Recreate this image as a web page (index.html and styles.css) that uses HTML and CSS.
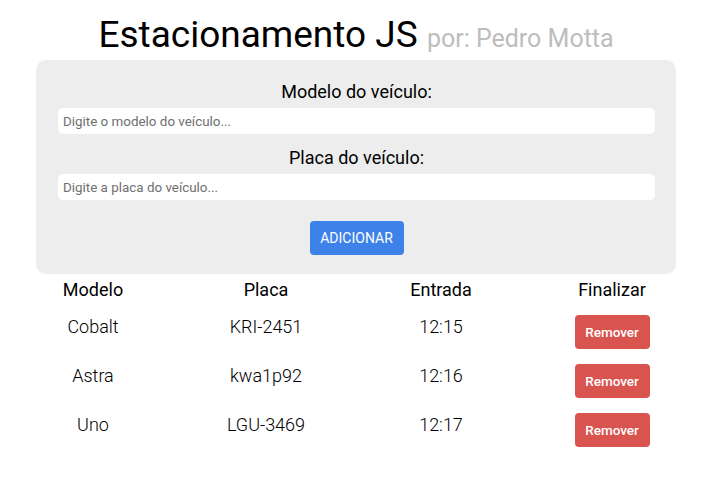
FILE: index.html
```html
<!DOCTYPE html>
<html lang="pt-BR">
<head>
<meta charset="utf-8">
<title>Estacionamento JS</title>
<link rel="stylesheet" href="styles.css">
</head>
<body>
<h1 class="title">Estacionamento JS <span class="author">por: Pedro Motta</span></h1>
<form class="panel">
  <label class="label" for="modelo">Modelo do veículo:</label>
  <input class="field" id="modelo" type="text" placeholder="Digite o modelo do veículo...">
  <label class="label" for="placa">Placa do veículo:</label>
  <input class="field" id="placa" type="text" placeholder="Digite a placa do veículo...">
  <button class="btn-add" type="button">ADICIONAR</button>
</form>
<div class="table">
  <div class="row head">
    <div class="cell">Modelo</div>
    <div class="cell">Placa</div>
    <div class="cell">Entrada</div>
    <div class="cell">Finalizar</div>
  </div>
  <div class="row">
    <div class="cell">Cobalt</div>
    <div class="cell">KRI-2451</div>
    <div class="cell">12:15</div>
    <div class="cell"><button class="btn-remove" type="button">Remover</button></div>
  </div>
  <div class="row">
    <div class="cell">Astra</div>
    <div class="cell">kwa1p92</div>
    <div class="cell">12:16</div>
    <div class="cell"><button class="btn-remove" type="button">Remover</button></div>
  </div>
  <div class="row">
    <div class="cell">Uno</div>
    <div class="cell">LGU-3469</div>
    <div class="cell">12:17</div>
    <div class="cell"><button class="btn-remove" type="button">Remover</button></div>
  </div>
</div>
</body>
</html>
```
FILE: styles.css
```css
* { box-sizing: border-box; }
body {
  margin: 0;
  font-family: Roboto, "Liberation Sans", sans-serif;
  color: #000;
  background: #fff;
}
.title {
  margin: 0 48px 0 36px;
  padding-top: 13px;
  height: 60px;
  text-align: center;
  font-weight: 400;
  font-size: 37px;
  line-height: 44px;
  white-space: nowrap;
}
.author {
  font-size: 25px;
  color: #bdbdbd;
}
.panel {
  margin: 0 48px 0 36px;
  background: #ededed;
  border-radius: 10px;
  padding: 20px 21px 19px 22px;
  display: flex;
  flex-direction: column;
  align-items: center;
}
.label {
  font-size: 18px;
  line-height: 24px;
  margin-bottom: 4px;
}
.field {
  width: 100%;
  height: 26px;
  border: none;
  border-radius: 5px;
  background: #fff;
  padding: 0 5px;
  font-family: Roboto, "Liberation Sans", sans-serif;
  font-size: 13.4px;
  margin-bottom: 12px;
}
.field::placeholder { color: #6f6f6f; }
.btn-add {
  margin-top: 9px;
  width: 94px;
  height: 34px;
  border: none;
  border-radius: 4px;
  background: #3d82e8;
  color: #fff;
  font-family: Roboto, "Liberation Sans", sans-serif;
  font-size: 14px;
}
.table {
  margin-left: 10px;
  width: 688px;
  padding-top: 1px;
}
.row {
  display: grid;
  grid-template-columns: 166px 180px 170px 172px;
  align-items: start;
  height: 49px;
}
.row.head {
  height: 30px;
  align-items: center;
  margin-bottom: 1px;
}
.cell {
  text-align: center;
  font-size: 18px;
  line-height: 24px;
  font-weight: 300;
  padding-top: 9px;
}
.head .cell { font-weight: 400; padding-top: 0; }
.btn-remove {
  display: block;
  margin: 0 auto;
  width: 75px;
  height: 34px;
  border: none;
  border-radius: 4px;
  background: #d9534f;
  color: #fff;
  font-family: Roboto, "Liberation Sans", sans-serif;
  font-size: 13.5px;
  font-weight: 500;
}
```
